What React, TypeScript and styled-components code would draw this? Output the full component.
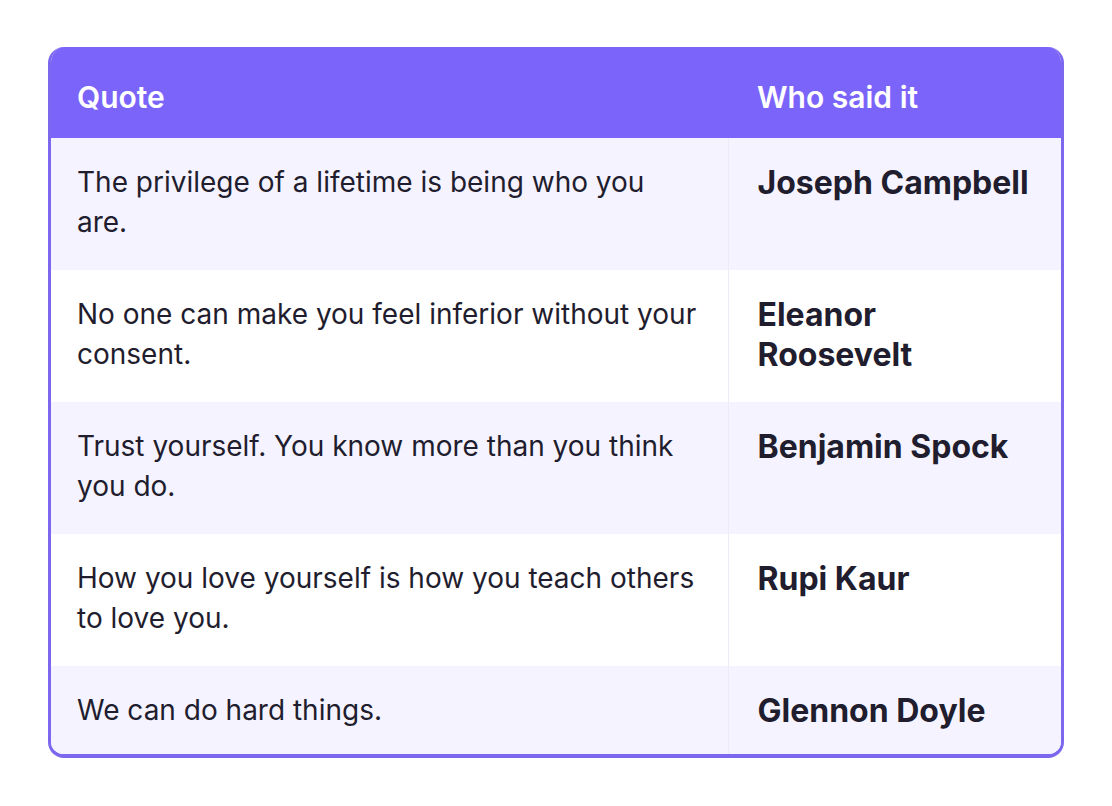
import React from 'react';
import styled, { createGlobalStyle } from 'styled-components';

const GlobalStyle = createGlobalStyle`
  html, body {
    margin: 0;
    padding: 0;
    background: #ffffff;
  }
  body {
    font-family: Inter, "Noto Sans", "Liberation Sans", sans-serif;
  }
`;

interface QuoteRow {
  quote: string;
  author: string;
}

const quotes: QuoteRow[] = [
  { quote: 'The privilege of a lifetime is being who you are.', author: 'Joseph Campbell' },
  { quote: 'No one can make you feel inferior without your consent.', author: 'Eleanor Roosevelt' },
  { quote: 'Trust yourself. You know more than you think you do.', author: 'Benjamin Spock' },
  { quote: 'How you love yourself is how you teach others to love you.', author: 'Rupi Kaur' },
  { quote: 'We can do hard things.', author: 'Glennon Doyle' },
];

const Page = styled.div`
  padding: 47px 48px 48px 48px;
`;

const Frame = styled.div`
  width: 1016px;
  box-sizing: border-box;
  border: 3px solid #7b68ee;
  border-top: none;
  border-bottom-width: 4px;
  border-radius: 16px;
  overflow: hidden;
`;

const Table = styled.table`
  width: 100%;
  border-collapse: collapse;
  table-layout: fixed;
`;

const HeadCell = styled.th<{ $wide?: boolean }>`
  width: ${p => (p.$wide ? '677px' : 'auto')};
  background: #7b64fa;
  color: #ffffff;
  text-align: left;
  vertical-align: top;
  font-size: 30px;
  font-weight: 600;
  line-height: 40px;
  height: 91px;
  box-sizing: border-box;
  padding: 30px 20px 21px ${p => (p.$wide ? '26px' : '29px')};
`;

const Row = styled.tr<{ $alt: boolean }>`
  background: ${p => (p.$alt ? '#f5f3ff' : '#ffffff')};
`;

const QuoteCell = styled.td<{ $last: boolean }>`
  vertical-align: top;
  color: #1f1d2e;
  font-size: 28px;
  line-height: 40px;
  padding: 24px 30px ${p => (p.$last ? '24px' : '28px')} 26px;
  border-right: 1px solid #edebf6;
`;

const AuthorCell = styled.td`
  vertical-align: top;
  color: #1f1d2e;
  font-size: 32px;
  font-weight: 700;
  line-height: 40px;
  padding: 25px 28px 0 29px;
`;

export default function App() {
  return (
    <Page>
      <GlobalStyle />
      <Frame>
        <Table>
          <thead>
            <tr>
              <HeadCell $wide>Quote</HeadCell>
              <HeadCell>Who said it</HeadCell>
            </tr>
          </thead>
          <tbody>
            {quotes.map((q, i) => (
              <Row key={q.author} $alt={i % 2 === 0}>
                <QuoteCell $last={i === quotes.length - 1}>{q.quote}</QuoteCell>
                <AuthorCell>{q.author}</AuthorCell>
              </Row>
            ))}
          </tbody>
        </Table>
      </Frame>
    </Page>
  );
}
